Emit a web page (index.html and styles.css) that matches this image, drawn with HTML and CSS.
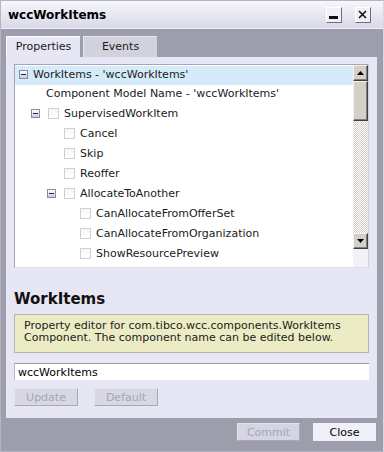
FILE: index.html
```html
<!DOCTYPE html>
<html lang="en">
<head>
  <meta charset="UTF-8">
  <title>wccWorkItems</title>
  <link rel="stylesheet" href="styles.css">
</head>
<body>
  <div class="window">
    <div class="titlebar">
      <span class="title">wccWorkItems</span>
      <span class="win-btn">
        <svg width="10" height="9" viewBox="0 0 10 9"><rect x="0" y="6" width="9" height="3" fill="#111"/></svg>
      </span>
      <span class="win-btn">
        <svg width="10" height="9" viewBox="0 0 10 9"><path d="M1 1 L8 8 M8 1 L1 8" stroke="#111" stroke-width="1.6"/></svg>
      </span>
    </div>

    <div class="body">
      <div class="tabs">
        <div class="tab active">Properties</div>
        <div class="tab">Events</div>
      </div>

      <div class="panel">
        <div class="tree">
          <div class="rows">
            <div class="row selected lvl0"><span class="exp"></span>WorkItems - 'wccWorkItems'</div>
            <div class="row lvl0 plain">Component Model Name - 'wccWorkItems'</div>
            <div class="row lvl1"><span class="exp"></span><span class="chk"></span>SupervisedWorkItem</div>
            <div class="row lvl2"><span class="chk"></span>Cancel</div>
            <div class="row lvl2"><span class="chk"></span>Skip</div>
            <div class="row lvl2"><span class="chk"></span>Reoffer</div>
            <div class="row lvl2b"><span class="exp"></span><span class="chk"></span>AllocateToAnother</div>
            <div class="row lvl3"><span class="chk"></span>CanAllocateFromOfferSet</div>
            <div class="row lvl3"><span class="chk"></span>CanAllocateFromOrganization</div>
            <div class="row lvl3"><span class="chk"></span>ShowResourcePreview</div>
          </div>
          <div class="scrollbar">
            <div class="sb-btn">
              <svg width="7" height="4" viewBox="0 0 7 4"><path d="M3.5 0 L7 4 L0 4 Z" fill="#000"/></svg>
            </div>
            <div class="sb-thumb"></div>
            <div class="sb-track"></div>
            <div class="sb-btn">
              <svg width="7" height="4" viewBox="0 0 7 4"><path d="M0 0 L7 0 L3.5 4 Z" fill="#000"/></svg>
            </div>
            <div class="sb-corner"></div>
          </div>
        </div>

        <h2 class="heading">WorkItems</h2>
        <div class="desc">Property editor for com.tibco.wcc.components.WorkItems Component. The component name can be edited below.</div>
        <input class="name-input" type="text" value="wccWorkItems">
        <div class="actions">
          <button class="btn" disabled>Update</button>
          <button class="btn" disabled>Default</button>
        </div>
      </div>
    </div>

    <div class="footer">
      <button class="btn footer-btn" disabled>Commit</button>
      <button class="btn footer-btn primary">Close</button>
    </div>
  </div>
</body>
</html>
```

FILE: styles.css
```css
* {
  box-sizing: border-box;
}

body {
  margin: 0;
  font-family: "DejaVu Sans", Verdana, sans-serif;
  font-size: 11px;
  color: #1a1a1a;
}

.window {
  width: 384px;
  height: 452px;
  background-color: #9d9dab;
  border: 1px solid #b4b4c4;
  border-right-color: #d8d8e4;
  display: flex;
  flex-direction: column;
}

.titlebar {
  height: 28px;
  display: flex;
  align-items: center;
  padding: 0 12px 0 7px;
  gap: 13px;
  background: linear-gradient(#f6f6fb, #d9d9e8);
  border-bottom: 1px solid #eeeef6;
}

.title {
  flex: 1;
  font-weight: bold;
  font-size: 12px;
  color: #000;
}

.win-btn {
  width: 16px;
  height: 16px;
  display: flex;
  align-items: center;
  justify-content: center;
  background-color: #f0f0f6;
  border: 1px solid #ffffff;
  border-right-color: #6e6e7c;
  border-bottom-color: #6e6e7c;
}

.body {
  padding: 7px 6px 0 5px;
}

.tabs {
  display: flex;
  gap: 3px;
}

.tab {
  width: 74px;
  height: 21px;
  padding-top: 3px;
  text-align: center;
  background-color: #d2d2dc;
  border-top: 1px solid #e8e8f0;
  border-left: 1px solid #e8e8f0;
}

.tab.active {
  background-color: #e6e6f4;
  border-top-color: #ffffff;
  border-left-color: #ffffff;
}

.panel {
  height: 361px;
  background-color: #e6e6f4;
  padding: 7px 8px 0 8px;
}

.tree {
  height: 204px;
  display: flex;
  background-color: #ffffff;
  border: 1px solid #a4a4b4;
  border-right-color: #d0d0dc;
  border-bottom-color: #e0e0ea;
}

.rows {
  flex: 1;
}

.row {
  height: 20px;
  display: flex;
  align-items: center;
  gap: 5px;
  white-space: nowrap;
  padding-bottom: 3px;
}

.row.selected {
  background-color: #d5ebf9;
  margin-top: 1px;
  height: 19px;
}

.lvl0 { padding-left: 4px; }
.lvl0.plain { padding-left: 31px; }
.lvl1 { padding-left: 16px; }
.lvl2 { padding-left: 49px; }
.lvl2b { padding-left: 32px; }
.lvl3 { padding-left: 65px; }

.lvl1 .exp, .lvl2b .exp {
  margin-right: 3px;
}

.exp {
  width: 9px;
  height: 9px;
  flex: none;
  border: 1px solid #7f8ea4;
  background: linear-gradient(#ffffff, #c8ccd8);
  position: relative;
}

.exp::after {
  content: "";
  position: absolute;
  left: 1px;
  top: 3px;
  width: 5px;
  height: 1px;
  background-color: #1c2a48;
}

.chk {
  width: 11px;
  height: 11px;
  flex: none;
  border: 1px solid #cfcfd4;
  background: linear-gradient(#f6f6f6, #ffffff);
}

.scrollbar {
  width: 15px;
  display: flex;
  flex-direction: column;
}

.sb-btn {
  height: 16px;
  display: flex;
  align-items: center;
  justify-content: center;
  background-color: #d4d0c8;
  border: 1px solid #f4f2ee;
  border-right-color: #404040;
  border-bottom-color: #404040;
  box-shadow: inset -1px -1px #808080;
}

.sb-thumb {
  height: 40px;
  background-color: #d4d0c8;
  border: 1px solid #f4f2ee;
  border-right-color: #404040;
  border-bottom-color: #404040;
  box-shadow: inset -1px -1px #808080;
}

.sb-track {
  flex: 1;
  background-color: #ffffff;
  background-image: repeating-conic-gradient(#d4d0c8 0 25%, #ffffff 0 50%);
  background-size: 2px 2px;
}

.sb-corner {
  height: 18px;
  background-color: #f2f2f8;
}

.heading {
  margin: 21px 0 0 0;
  font-size: 15px;
  font-weight: bold;
  line-height: 20px;
  color: #111;
}

.desc {
  margin-top: 5px;
  height: 39px;
  padding: 5px 6px 0 9px;
  font-size: 11px;
  line-height: 12px;
  background-color: #ececc4;
  border: 1px solid #b4b4b0;
  color: #222;
}

.name-input {
  display: block;
  width: 100%;
  height: 17px;
  margin-top: 10px;
  padding: 0 3px;
  font-family: "DejaVu Sans", Verdana, sans-serif;
  font-size: 11px;
  color: #000;
  background-color: #ffffff;
  border: none;
  border-top: 1px solid #9a9aa8;
  border-left: 1px solid #b8b8c4;
}

.actions {
  display: flex;
  gap: 16px;
  margin-top: 8px;
}

.btn {
  width: 64px;
  height: 18px;
  padding: 0;
  font-family: "DejaVu Sans", Verdana, sans-serif;
  font-size: 11px;
  background-color: #d8d8e4;
  color: #000;
  border: 1px solid #e4e4ee;
  border-right-color: #a8a8b8;
  border-bottom-color: #a8a8b8;
}

.btn:disabled {
  color: #a4a4b8;
}

.footer {
  display: flex;
  justify-content: flex-end;
  gap: 13px;
  padding: 5px 7px 0 0;
}

.footer-btn {
  width: 63px;
}

.footer-btn:disabled {
  background-color: #d4d4e2;
}

.footer-btn.primary {
  background-color: #f0f0f8;
  border-color: #f0f0f8;
}
```
